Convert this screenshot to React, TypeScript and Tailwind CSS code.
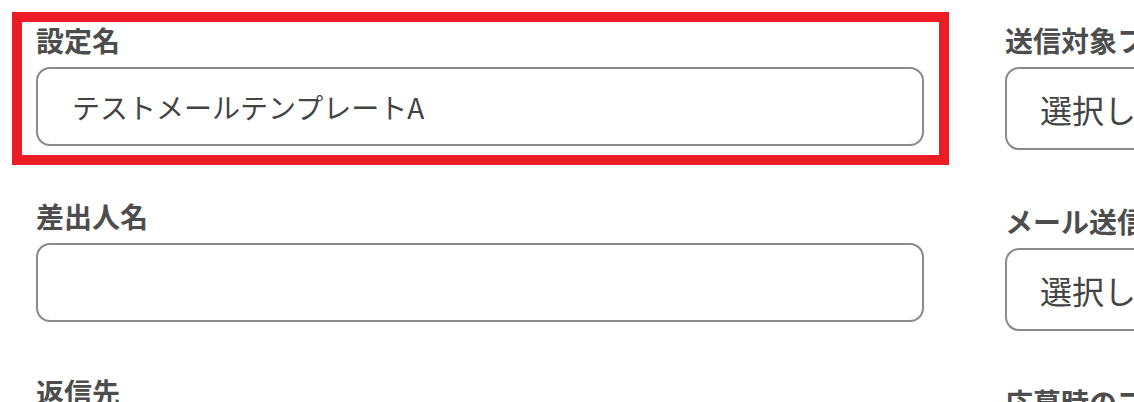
const font = { fontFamily: '"Noto Sans CJK JP", "Noto Sans", sans-serif' }

function Field({ label, value }: { label: string; value?: string }) {
  return (
    <div className="mb-[49px]">
      <div className="text-[28px] font-bold leading-[42px] text-[#4d4d4d] whitespace-nowrap">{label}</div>
      <div className="mt-[6px] h-[79px] border-2 border-[#8a8a8a] rounded-[14px] pl-[34px] flex items-center text-[28px] text-[#444] whitespace-nowrap">
        {value}
      </div>
    </div>
  )
}

function SelectField({ label }: { label: string }) {
  return (
    <div className="mb-[50px]">
      <div className="text-[28px] font-bold leading-[42px] text-[#4d4d4d] whitespace-nowrap">{label}</div>
      <div className="mt-[6px] h-[83px] border-2 border-[#8a8a8a] rounded-[14px] pl-[33px] flex items-center text-[32px] text-[#444] whitespace-nowrap">
        選択してください
      </div>
    </div>
  )
}

export default function App() {
  return (
    <div className="relative w-[1134px] h-[402px] overflow-hidden bg-white" style={font}>
      <div className="flex pl-[36px] pt-[19px] gap-[81px]">
        <div className="w-[888px] shrink-0">
          <Field label="設定名" value="テストメールテンプレートA" />
          <Field label="差出人名" />
          <Field label="返信先" />
        </div>
        <div className="w-[600px] shrink-0">
          <SelectField label="送信対象ファイル" />
          <SelectField label="メール送信タイミング" />
          <SelectField label="応募時のフォーム" />
        </div>
      </div>
      {/* highlight frame */}
      <div className="absolute left-[12px] top-[12px] w-[937px] h-[153px] border-[10px] border-[#ec1c24]" />
    </div>
  )
}
